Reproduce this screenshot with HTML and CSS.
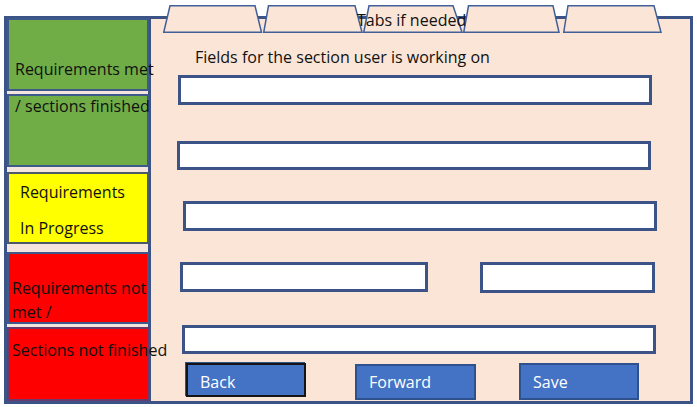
FILE: index.html
```html
<!DOCTYPE html>
<html lang="en">
<head>
  <meta charset="UTF-8">
  <title>Section editor</title>
  <link rel="stylesheet" href="styles.css">
</head>
<body>
  <div class="tabs">
    <svg class="tab" width="100" height="28" viewBox="0 0 100 28"><polygon points="0.75,27.25 7,0.75 92,0.75 98.5,27.25"/></svg>
    <svg class="tab" width="100" height="28" viewBox="0 0 100 28"><polygon points="0.75,27.25 5.5,0.75 92,0.75 99,27.25"/></svg>
    <svg class="tab" width="100" height="28" viewBox="0 0 100 28"><polygon points="0.75,27.25 6,0.75 90,0.75 99,27.25"/></svg>
    <svg class="tab" width="100" height="28" viewBox="0 0 100 28"><polygon points="0.75,27.25 5.5,0.75 90,0.75 96,27.25"/></svg>
    <svg class="tab" width="100" height="28" viewBox="0 0 100 28"><polygon points="0.75,27.25 5,0.75 91,0.75 98,27.25"/></svg>
    <span class="tabs-label">Tabs if needed</span>
  </div>

  <div class="frame">
    <div class="sidebar">
      <div class="status status-met-1">Requirements met</div>
      <div class="status status-met-2">/ sections finished</div>
      <div class="status status-progress">Requirements<br>In Progress</div>
      <div class="status status-not-1">Requirements not<br>met /</div>
      <div class="status status-not-2">Sections not finished</div>
    </div>

    <div class="panel">
      <div class="panel-title">Fields for the section user is working on</div>
      <div class="field field-1"></div>
      <div class="field field-2"></div>
      <div class="field field-3"></div>
      <div class="field-row">
        <div class="field field-4a"></div>
        <div class="field field-4b"></div>
      </div>
      <div class="field field-5"></div>
      <div class="actions">
        <button class="btn btn-back">Back</button>
        <button class="btn btn-forward">Forward</button>
        <button class="btn btn-save">Save</button>
      </div>
    </div>
  </div>
</body>
</html>
```

FILE: styles.css
```css
body {
  margin: 0;
  background: #fff;
  font-family: "Open Sans", "Liberation Sans", sans-serif;
  font-size: 16px;
  color: #111;
}
.tabs {
  position: relative;
  z-index: 1;
  display: flex;
  margin-left: 163px;
  padding-top: 5px;
  height: 28px;
}
.tab {
  display: block;
  flex: none;
}
.tab polygon {
  fill: #fbe5d6;
  stroke: #41609a;
  stroke-width: 1.5;
}
.tabs-label {
  position: absolute;
  left: 194px;
  top: 10px;
  line-height: 20px;
  white-space: nowrap;
}
.frame {
  display: flex;
  margin: -17px 0 0 4px;
  width: 689px;
  height: 388px;
}
.sidebar {
  position: relative;
  z-index: 1;
  flex: none;
  width: 141px;
  background: #f4e6de;
  border: 3px solid #3b5387;
  border-right: none;
  border-top-width: 2px;
  display: flex;
  flex-direction: column;
}
.status {
  border: 2px solid #3d5a8a;
  white-space: nowrap;
  line-height: 20px;
  margin-right: -1px;
}
.status-met-1 {
  background: #70ad47;
  height: 30px;
  padding: 39px 0 0 6px;
}
.status-met-2 {
  background: #70ad47;
  margin-top: 3px;
  height: 70px;
  padding: 0 0 0 6px;
}
.status-progress {
  background: #ffff00;
  border-color: #4d5a6b;
  margin-top: 5px;
  height: 68px;
  line-height: 36px;
  padding: 0 0 0 11px;
}
.status-not-1 {
  background: #ff0000;
  margin-top: 8px;
  height: 46px;
  line-height: 24px;
  padding: 22px 0 0 3px;
}
.status-not-2 {
  background: #ff0000;
  border-color: #6a3a6a;
  margin-top: 3px;
  height: 59px;
  padding: 11px 0 0 3px;
}
.panel {
  flex: 1;
  background: #fbe5d6;
  border: 3px solid #3b5387;
  display: flex;
  flex-direction: column;
  align-items: flex-start;
}
.panel-title {
  margin: 28px 0 0 44px;
  line-height: 20px;
}
.field {
  box-sizing: border-box;
  background: #fff;
  border: 3px solid #3b5387;
  width: 474px;
  height: 30px;
}
.field-1 { margin: 8px 0 0 27px; }
.field-2 { margin: 36px 0 0 26px; height: 29px; }
.field-3 { margin: 31px 0 0 32px; }
.field-row {
  display: flex;
  align-items: flex-start;
  margin: 31px 0 0 29px;
}
.field-4a { width: 248px; }
.field-4b { width: 175px; height: 31px; margin-left: 52px; }
.field-5 { margin: 32px 0 0 31px; height: 29px; }
.actions {
  display: flex;
  align-items: flex-start;
  margin: 9px 0 0 35px;
}
.btn {
  box-sizing: border-box;
  background: #4472c4;
  border: 2px solid #2f528f;
  color: #fff;
  font: inherit;
  text-align: left;
  padding: 0 0 0 12px;
  width: 120px;
  height: 37px;
}
.btn-back {
  height: 34px;
  padding-top: 3px;
  border-color: #141414;
  box-shadow: -1px -1px 0 #2f528f;
}
.btn-forward {
  width: 121px;
  height: 36px;
  margin: 1px 0 0 49px;
}
.btn-save {
  margin-left: 43px;
}
```
